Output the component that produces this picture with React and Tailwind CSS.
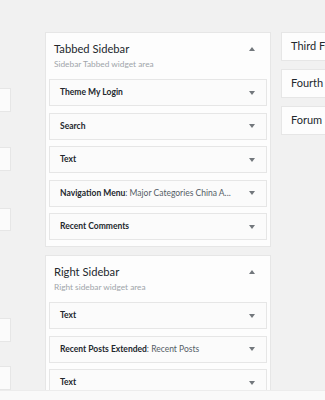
function Caret({ up = false }) {
  return (
    <svg width="6" height="4" viewBox="0 0 6 4" className="shrink-0">
      {up
        ? <polygon points="3,0 6,4 0,4" fill="#72777c" />
        : <polygon points="0,0 6,0 3,4" fill="#72777c" />}
    </svg>
  );
}

function Widget({ name, title }) {
  return (
    <div className="h-[27px] flex items-center justify-between pl-[10px] pr-[11px] border border-[#e6e6e6] bg-[#fbfbfb]">
      <span className="text-[8.5px] whitespace-nowrap text-[#23282d] font-bold">
        {name}
        {title && <span className="font-normal text-[#555d66]">: {title}</span>}
      </span>
      <Caret />
    </div>
  );
}

function Sidebar({ title, desc, widgets }) {
  return (
    <div className="bg-[#fdfdfd] border border-[#e6e6e6] px-[3px] pb-[6px]">
      <div className="h-[46px] pl-[5px] pr-[12px] pt-[7px]">
        <div className="flex items-center justify-between">
          <span className="text-[11.2px] leading-[18px] text-[#23282d]">{title}</span>
          <Caret up />
        </div>
        <div className="text-[8.3px] leading-[12px] text-[#a0a5aa]">{desc}</div>
      </div>
      <div className="flex flex-col gap-[6.5px]">
        {widgets.map((w, i) => (
          <Widget key={i} name={w[0]} title={w[1]} />
        ))}
      </div>
    </div>
  );
}

function SideCard({ title }) {
  return (
    <div className="h-[29px] flex items-center pl-[9px] bg-[#fdfdfd] border border-[#e6e6e6] whitespace-nowrap">
      <span className="text-[11px] text-[#23282d]">{title}</span>
    </div>
  );
}

export default function App() {
  return (
    <div className="w-[325px] h-[400px] overflow-hidden bg-[#f1f1f1] flex flex-col font-[Lato,sans-serif]">
      <div className="h-[390px] overflow-hidden flex pt-[32px]">
        {/* left column, mostly off screen */}
        <div className="w-[200px] -ml-[189px] shrink-0 flex flex-col">
          {[88, 149, 212, 325, 375].map((y, i, arr) => (
            <div
              key={i}
              className="h-[26px] bg-[#fbfbfb] border border-[#e6e6e6] flex items-center justify-end pr-[10px]"
              style={{ marginTop: i === 0 ? y - 32 : y - arr[i - 1] - 26 }}
            >
              <div className="w-[2px] h-[2px] bg-[#8fb4d9]" />
            </div>
          ))}
        </div>

        {/* middle column */}
        <div className="w-[226px] ml-[34px] shrink-0 flex flex-col gap-[8px]">
          <Sidebar
            title="Tabbed Sidebar"
            desc="Sidebar Tabbed widget area"
            widgets={[
              ['Theme My Login'],
              ['Search'],
              ['Text'],
              ['Navigation Menu', 'Major Categories China A...'],
              ['Recent Comments'],
            ]}
          />
          <Sidebar
            title="Right Sidebar"
            desc="Right sidebar widget area"
            widgets={[
              ['Text'],
              ['Recent Posts Extended', 'Recent Posts'],
              ['Text'],
              ['Text'],
            ]}
          />
        </div>

        {/* right column */}
        <div className="w-[226px] ml-[10px] shrink-0 flex flex-col gap-[8px]">
          <SideCard title="Third Footer" />
          <SideCard title="Fourth Footer" />
          <SideCard title="Forum Sidebar" />
        </div>
      </div>
      <div className="h-[10px] bg-[#f9f9f9] border-t border-[#ececec]" />
    </div>
  );
}
